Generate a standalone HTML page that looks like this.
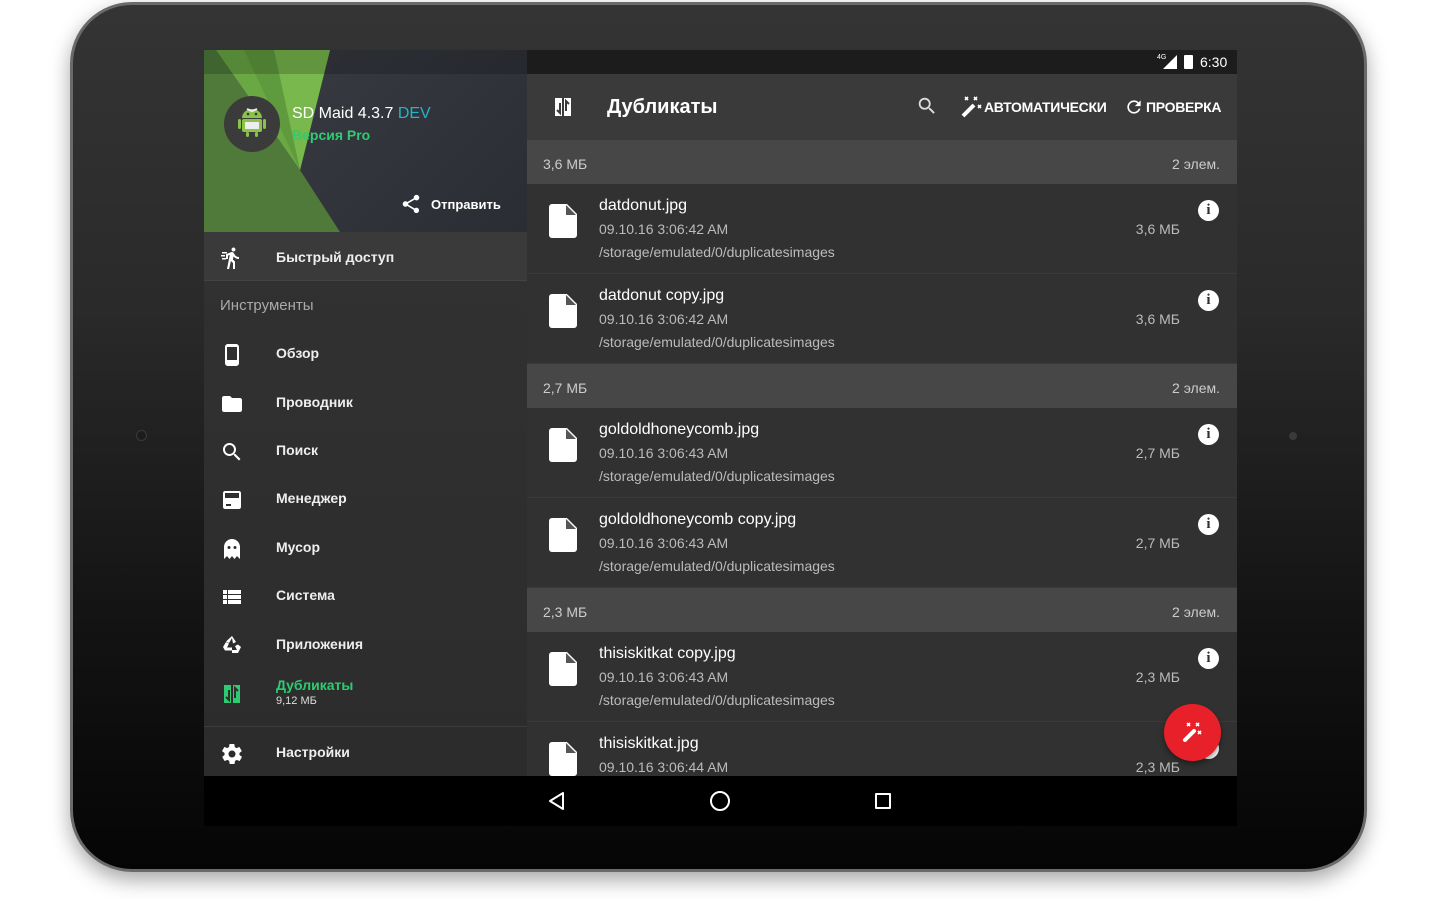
<!DOCTYPE html>
<html><head><meta charset="utf-8">
<style>
*{margin:0;padding:0;box-sizing:border-box}
body{width:1439px;height:900px;background:#fff;position:relative;overflow:hidden;font-family:"Liberation Sans",sans-serif}
.tab{position:absolute;left:70px;top:2px;width:1297px;height:870px;border-radius:62px;background:linear-gradient(180deg,#343434 0%,#2a2a2a 35%,#141414 70%,#050505 100%);border:3px solid #6a6a6a;box-shadow:0 8px 20px rgba(0,0,0,.35)}
.screen{position:absolute;left:204px;top:50px;width:1033px;height:776px;background:#000;overflow:hidden}
.drawer{position:absolute;left:0;top:0;width:323px;height:726px;background:linear-gradient(180deg,#333 0%,#2c2c2c 100%)}
.dh{position:absolute;left:0;top:0;width:323px;height:182px;background:linear-gradient(135deg,#3a3d44,#2a2d33);overflow:hidden}
.main{position:absolute;left:323px;top:0;width:710px;height:726px;background:#303030}
.sb{position:absolute;left:0;top:0;width:710px;height:24px;background:#1c1c1c;color:#fff;font-size:14px}
.tb{position:absolute;left:0;top:24px;width:710px;height:66px;background:#3a3a3a;color:#fff}
.sec{position:absolute;left:0;width:710px;height:44px;background:#474747;color:#ccc;font-size:14px}
.sec .l{position:absolute;left:16px;top:16px}
.sec .r{position:absolute;right:17px;top:16px}
.it{position:absolute;left:0;width:710px;height:90px;background:#313131;border-bottom:1px solid #3a3a3a}
.it .n{position:absolute;left:72px;top:13px;color:#fff;font-size:16px}
.it .d{position:absolute;left:72px;top:37px;color:#bbb;font-size:14px}
.it .p{position:absolute;left:72px;top:60px;color:#bbb;font-size:14px}
.it .s{position:absolute;right:57px;top:37px;color:#bbb;font-size:14px}
.it .fi{position:absolute;left:22px;top:20px}
.it .in{position:absolute;left:671px;top:16px;width:21px;height:21px;border-radius:50%;background:#fff;color:#303030;font-weight:bold;font-size:15px;text-align:center;line-height:21px;font-family:"Liberation Serif",serif}
.di{position:absolute;left:0;width:323px;height:48px;color:#eee;font-size:14px;font-weight:bold}
.di .t{position:absolute;left:72px;top:16px}
.di svg{position:absolute;left:16px;top:14px}
.nav{position:absolute;left:0;top:726px;width:1033px;height:50px;background:#000}
</style></head><body>
<div class="tab"></div>
<div style="position:absolute;left:136px;top:430px;width:11px;height:11px;border-radius:50%;background:#1c1c1c;border:1px solid #3a3a3a"></div>
<div style="position:absolute;left:1289px;top:432px;width:8px;height:8px;border-radius:50%;background:#3a3a3a"></div>
<div class="screen">
 <div class="drawer">
  <div class="dh">
   <svg width="323" height="182" style="position:absolute;left:0;top:0">
    <polygon points="0,0 12,0 96,120 136,182 0,182" fill="#4f7a3a"/>
    <polygon points="12,0 126,0 96,120" fill="#6aa844"/>
    <polygon points="40,0 100,0 96,120" fill="#5f9a3e"/>
    <polygon points="70,0 126,0 96,120" fill="#78b84c"/>
    <polygon points="0,0 323,0 323,24 0,24" fill="rgba(0,0,0,.18)"/>
   </svg>
   <div style="position:absolute;left:20px;top:46px;width:56px;height:56px;border-radius:50%;background:#3b3b3b"></div>
   <svg width="40" height="40" style="position:absolute;left:28px;top:52px" viewBox="0 0 40 40">
    <path d="M10 16a10 9 0 0 1 20 0z" fill="#8bc34a"/><rect x="10" y="17" width="20" height="13" rx="2" fill="#8bc34a"/>
    <rect x="13" y="20" width="14" height="7" fill="#eee"/><rect x="6" y="17" width="3" height="10" rx="1.5" fill="#8bc34a"/><rect x="31" y="17" width="3" height="10" rx="1.5" fill="#8bc34a"/>
    <rect x="14" y="30" width="3" height="5" rx="1.5" fill="#8bc34a"/><rect x="23" y="30" width="3" height="5" rx="1.5" fill="#8bc34a"/>
    <circle cx="16" cy="12" r="1.3" fill="#333"/><circle cx="24" cy="12" r="1.3" fill="#333"/><path d="M15 7l5 2 5-2" stroke="#eee" stroke-width="2" fill="none"/>
   </svg>
   <div style="position:absolute;left:88px;top:55px;color:#fff;font-size:16px">SD Maid 4.3.7 <span style="color:#26b4c8">DEV</span></div>
   <div style="position:absolute;left:88px;top:77px;color:#2ecc71;font-size:14px;font-weight:bold">Версия Pro</div>
   <svg width="22" height="22" viewBox="0 0 24 24" style="position:absolute;left:196px;top:143px"><path fill="#fff" d="M18 16.1c-.8 0-1.5.3-2 .8l-7.1-4.2c.1-.2.1-.5.1-.7s0-.5-.1-.7L16 7.2c.5.5 1.2.8 2 .8 1.7 0 3-1.3 3-3s-1.3-3-3-3-3 1.3-3 3c0 .2 0 .5.1.7L8 9.8C7.5 9.3 6.8 9 6 9c-1.7 0-3 1.3-3 3s1.3 3 3 3c.8 0 1.5-.3 2-.8l7.1 4.2c-.1.2-.1.4-.1.6 0 1.6 1.3 2.9 2.9 2.9s2.9-1.3 2.9-2.9-1.2-2.9-2.8-2.9z"/></svg>
   <div style="position:absolute;left:227px;top:147px;color:#fff;font-size:13px;font-weight:bold">Отправить</div>
  </div>
  <div class="di" style="top:182px;height:49px;background:#3a3a3a;border-bottom:1px solid #444"><svg width="24" height="24" viewBox="0 0 24 24"><path fill="#fff" d="M13.5 5.5c1.1 0 2-.9 2-2s-.9-2-2-2-2 .9-2 2 .9 2 2 2zM9.8 8.9L7 23h2.1l1.8-8 2.1 2v6h2v-7.5l-2.1-2 .6-3C14.8 12 16.8 13 19 13v-2c-1.9 0-3.5-1-4.3-2.4l-1-1.6c-.4-.6-1-1-1.7-1-.3 0-.5.1-.8.1L6 8.3V13h2V9.6l1.8-.7M2 6h5v1.5H2zM1 9h4v1.5H1zM2 12h4v1.5H2z"/></svg><span class="t" style="top:17px">Быстрый доступ</span></div>
  <div style="position:absolute;left:16px;top:247px;color:#aaa;font-size:15px">Инструменты</div>
  <div class="di" style="top:279px"><svg width="24" height="24" viewBox="0 0 24 24"><path fill="#fff" d="M16 1H8C6.3 1 5 2.3 5 4v16c0 1.7 1.3 3 3 3h8c1.7 0 3-1.3 3-3V4c0-1.7-1.3-3-3-3zm1 16H7V4h10v13z"/></svg><span class="t">Обзор</span></div>
  <div class="di" style="top:328px"><svg width="24" height="24" viewBox="0 0 24 24"><path fill="#fff" d="M10 4H4c-1.1 0-2 .9-2 2v12c0 1.1.9 2 2 2h16c1.1 0 2-.9 2-2V8c0-1.1-.9-2-2-2h-8l-2-2z"/></svg><span class="t">Проводник</span></div>
  <div class="di" style="top:376px"><svg width="24" height="24" viewBox="0 0 24 24"><path fill="#fff" d="M15.5 14h-.8l-.3-.3c1-1.1 1.6-2.6 1.6-4.2C16 5.9 13.1 3 9.5 3S3 5.9 3 9.5 5.9 16 9.5 16c1.6 0 3.1-.6 4.2-1.6l.3.3v.8l5 5 1.5-1.5-5-5zm-6 0C7 14 5 12 5 9.5S7 5 9.5 5 14 7 14 9.5 12 14 9.5 14z"/></svg><span class="t">Поиск</span></div>
  <div class="di" style="top:424px"><svg width="24" height="24" viewBox="0 0 24 24"><path fill="#fff" d="M19 3H5c-1.1 0-2 .9-2 2v14c0 1.1.9 2 2 2h14c1.1 0 2-.9 2-2V5c0-1.1-.9-2-2-2zM11 18H6v-2h5v2zm8-8H5V5h14v5z"/></svg><span class="t">Менеджер</span></div>
  <div class="di" style="top:473px"><svg width="24" height="24" viewBox="0 0 24 24"><path fill="#fff" d="M12 2C7.6 2 4 5.6 4 10v12l3-3 2.5 3 2.5-3 2.5 3 2.5-3 3 3V10c0-4.4-3.6-8-8-8zM9 12a1.5 1.5 0 1 1 0-3 1.5 1.5 0 0 1 0 3zm6 0a1.5 1.5 0 1 1 0-3 1.5 1.5 0 0 1 0 3z"/></svg><span class="t">Мусор</span></div>
  <div class="di" style="top:521px"><svg width="24" height="24" viewBox="0 0 24 24"><path fill="#fff" d="M3 5h18v4H3zM3 10h18v4H3zM3 15h18v4H3z"/><path stroke="#2f2f2f" stroke-width="1" d="M7.5 5v14"/></svg><span class="t">Система</span></div>
  <div class="di" style="top:570px"><svg width="24" height="24" viewBox="0 0 24 24"><path fill="#fff" d="M12 2l4 6-3 1.5L12 4 9 9 6 7.5zM3 13l3-5 3 1.5-2 4h5v3H5zM21 13l-3 6h-6v-3h5l-2-4 3-1.5z"/></svg><span class="t">Приложения</span></div>
  <div class="di" style="top:618px"><svg width="24" height="24" viewBox="0 0 24 24"><path fill="#2ecc71" d="M4 3h7v18H4zM13 3h7v18h-7z"/><path stroke="#2f2f2f" stroke-width="2" fill="none" d="M9 8v10l-3-3M15 16V6l3 3"/></svg><span class="t" style="color:#2ecc71;top:9px">Дубликаты</span><span style="position:absolute;left:72px;top:27px;font-size:11px;font-weight:normal;color:#ddd">9,12 МБ</span></div>
  <div style="position:absolute;left:0;top:676px;width:323px;height:1px;background:#3c3c3c"></div>
  <div class="di" style="top:678px"><svg width="24" height="24" viewBox="0 0 24 24"><path fill="#fff" d="M19.4 13c.1-.3.1-.7.1-1s0-.7-.1-1l2.1-1.6c.2-.2.2-.4.1-.6l-2-3.5c-.1-.2-.4-.3-.6-.2l-2.5 1c-.5-.4-1.1-.7-1.7-1l-.4-2.6c0-.3-.2-.5-.5-.5h-4c-.2 0-.5.2-.5.4l-.4 2.7c-.6.2-1.100.6-1.7 1l-2.5-1c-.2-.1-.5 0-.6.2l-2 3.5c-.1.2-.1.5.1.6L4.6 11c0 .3-.1.7-.1 1s0 .7.1 1l-2.1 1.6c-.2.2-.2.4-.1.6l2 3.5c.1.2.4.3.6.2l2.5-1c.5.4 1.1.7 1.7 1l.4 2.7c0 .2.2.4.5.4h4c.2 0 .5-.2.5-.4l.4-2.700c.6-.2 1.2-.6 1.7-1l2.5 1c.2.1.5 0 .6-.2l2-3.5c.1-.2.1-.5-.1-.6L19.4 13zM12 15.5c-1.9 0-3.5-1.6-3.5-3.5s1.6-3.5 3.5-3.5 3.5 1.6 3.5 3.5-1.6 3.5-3.5 3.5z"/></svg><span class="t">Настройки</span></div>
 </div>
 <div class="main">
  <div class="sb">
   <span style="position:absolute;left:630px;top:4px;font-size:7px">4G</span>
   <svg width="14" height="14" style="position:absolute;left:636px;top:5px"><polygon points="0,14 14,0 14,14" fill="#fff"/></svg>
   <div style="position:absolute;left:657px;top:5px;width:9px;height:14px;background:#fff;border-radius:1px"></div>
   <span style="position:absolute;left:673px;top:4px">6:30</span>
  </div>
  <div class="tb">
   <svg width="24" height="24" viewBox="0 0 24 24" style="position:absolute;left:24px;top:21px"><path fill="#fff" d="M4 3h7v18H4zM13 3h7v18h-7z"/><path stroke="#3a3a3a" stroke-width="2" fill="none" d="M9 8v10l-3-3M15 16V6l3 3"/></svg>
   <div style="position:absolute;left:80px;top:22px;font-size:20px;font-weight:bold">Дубликаты</div>
   <svg width="22" height="22" viewBox="0 0 24 24" style="position:absolute;left:389px;top:21px"><path fill="#ddd" d="M15.5 14h-.8l-.3-.3c1-1.1 1.6-2.6 1.6-4.2C16 5.900 13.1 3 9.5 3S3 5.9 3 9.5 5.9 16 9.5 16c1.6 0 3.1-.6 4.2-1.6l.3.3v.8l5 5 1.5-1.5-5-5zm-6 0C7 14 5 12 5 9.5S7 5 9.5 5 14 7 14 9.5 12 14 9.5 14z"/></svg>
   <svg width="24" height="24" viewBox="0 0 24 24" style="position:absolute;left:433px;top:21px"><path stroke="#fff" stroke-width="4" d="M3 21L14 10"/><path stroke="#fff" stroke-width="1.6" d="M5 2l3 3M8 2L5 5M14 2l3 3M17 2l-3 3M18 10l3 3M21 10l-3 3"/></svg>
   <div style="position:absolute;left:457px;top:25px;font-size:14px;font-weight:bold;letter-spacing:-0.3px">АВТОМАТИЧЕСКИ</div>
   <svg width="20" height="20" viewBox="0 0 24 24" style="position:absolute;left:597px;top:23px"><path fill="#fff" d="M17.6 6.4C16.2 4.900 14.2 4 12 4c-4.4 0-8 3.6-8 8s3.6 8 8 8c3.700 0 6.8-2.600 7.7-6h-2.100c-.8 2.300-3 4-5.600 4-3.300 0-6-2.700-6-6s2.700-6 6-6c1.700 0 3.100.7 4.200 1.800L13 11h7V4l-2.400 2.400z"/></svg>
   <div style="position:absolute;left:619px;top:25px;font-size:14px;font-weight:bold;letter-spacing:-0.3px">ПРОВЕРКА</div>
  </div>
  <div class="sec" style="top:90px"><span class="l">3,6 МБ</span><span class="r">2 элем.</span></div>
  <div class="it" style="top:134px"><svg class="fi" width="28" height="34" viewBox="0 0 28 34"><path d="M3 0h15l10 10v21a3 3 0 0 1-3 3H3a3 3 0 0 1-3-3V3a3 3 0 0 1 3-3z" fill="#fff"/><path d="M17 1v10h10" fill="#555"/></svg><div class="n">datdonut.jpg</div><div class="d">09.10.16 3:06:42 AM</div><div class="p">/storage/emulated/0/duplicatesimages</div><div class="s">3,6 МБ</div><div class="in">i</div></div>
  <div class="it" style="top:224px"><svg class="fi" width="28" height="34" viewBox="0 0 28 34"><path d="M3 0h15l10 10v21a3 3 0 0 1-3 3H3a3 3 0 0 1-3-3V3a3 3 0 0 1 3-3z" fill="#fff"/><path d="M17 1v10h10" fill="#555"/></svg><div class="n">datdonut copy.jpg</div><div class="d">09.10.16 3:06:42 AM</div><div class="p">/storage/emulated/0/duplicatesimages</div><div class="s">3,6 МБ</div><div class="in">i</div></div>
  <div class="sec" style="top:314px"><span class="l">2,7 МБ</span><span class="r">2 элем.</span></div>
  <div class="it" style="top:358px"><svg class="fi" width="28" height="34" viewBox="0 0 28 34"><path d="M3 0h15l10 10v21a3 3 0 0 1-3 3H3a3 3 0 0 1-3-3V3a3 3 0 0 1 3-3z" fill="#fff"/><path d="M17 1v10h10" fill="#555"/></svg><div class="n">goldoldhoneycomb.jpg</div><div class="d">09.10.16 3:06:43 AM</div><div class="p">/storage/emulated/0/duplicatesimages</div><div class="s">2,7 МБ</div><div class="in">i</div></div>
  <div class="it" style="top:448px"><svg class="fi" width="28" height="34" viewBox="0 0 28 34"><path d="M3 0h15l10 10v21a3 3 0 0 1-3 3H3a3 3 0 0 1-3-3V3a3 3 0 0 1 3-3z" fill="#fff"/><path d="M17 1v10h10" fill="#555"/></svg><div class="n">goldoldhoneycomb copy.jpg</div><div class="d">09.10.16 3:06:43 AM</div><div class="p">/storage/emulated/0/duplicatesimages</div><div class="s">2,7 МБ</div><div class="in">i</div></div>
  <div class="sec" style="top:538px"><span class="l">2,3 МБ</span><span class="r">2 элем.</span></div>
  <div class="it" style="top:582px"><svg class="fi" width="28" height="34" viewBox="0 0 28 34"><path d="M3 0h15l10 10v21a3 3 0 0 1-3 3H3a3 3 0 0 1-3-3V3a3 3 0 0 1 3-3z" fill="#fff"/><path d="M17 1v10h10" fill="#555"/></svg><div class="n">thisiskitkat copy.jpg</div><div class="d">09.10.16 3:06:43 AM</div><div class="p">/storage/emulated/0/duplicatesimages</div><div class="s">2,3 МБ</div><div class="in">i</div></div>
  <div class="it" style="top:672px"><svg class="fi" width="28" height="34" viewBox="0 0 28 34"><path d="M3 0h15l10 10v21a3 3 0 0 1-3 3H3a3 3 0 0 1-3-3V3a3 3 0 0 1 3-3z" fill="#fff"/><path d="M17 1v10h10" fill="#555"/></svg><div class="n">thisiskitkat.jpg</div><div class="d">09.10.16 3:06:44 AM</div><div class="p">/storage/emulated/0/duplicatesimages</div><div class="s">2,3 МБ</div><div class="in">i</div></div>
  <div style="position:absolute;left:637px;top:654px;width:57px;height:57px;border-radius:50%;background:#e8202a;box-shadow:0 3px 6px rgba(0,0,0,.4)"><svg width="24" height="24" viewBox="0 0 24 24" style="position:absolute;left:17px;top:16px"><path stroke="#fff" stroke-width="4" stroke-linecap="round" d="M4 20L13 11"/><path stroke="#fff" stroke-width="1.6" d="M6 3l3 3M9 3L6 6M15 3l3 3M18 3l-3 3M17 11l3 3M20 11l-3 3"/></svg></div>
 </div>
 <div class="nav">
  <svg width="20" height="20" viewBox="0 0 20 20" style="position:absolute;left:343px;top:15px"><path d="M16 2L3 10l13 8z" fill="none" stroke="#fff" stroke-width="2" stroke-linejoin="round"/></svg>
  <div style="position:absolute;left:506px;top:15px;width:20px;height:20px;border-radius:50%;border:2px solid #fff"></div>
  <div style="position:absolute;left:671px;top:17px;width:16px;height:16px;border:2px solid #fff;border-radius:1px"></div>
 </div>
</div>
</body></html>
